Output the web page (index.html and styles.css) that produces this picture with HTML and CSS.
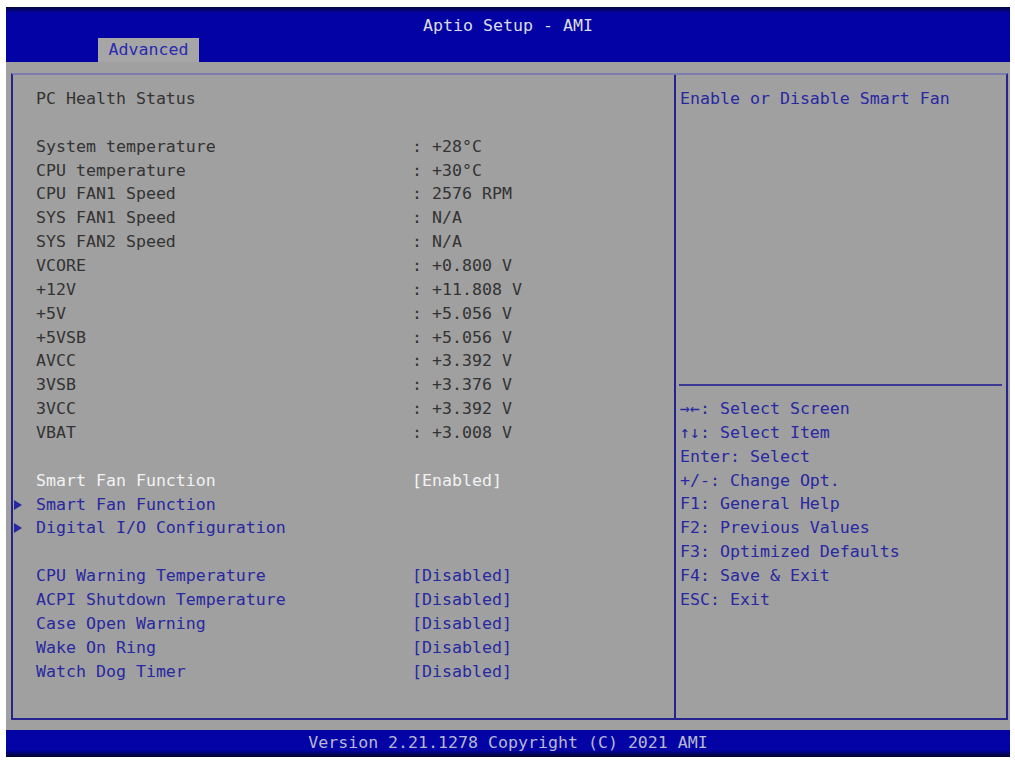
FILE: index.html
```html
<!DOCTYPE html>
<html lang="en">
<head>
  <meta charset="UTF-8">
  <title>Aptio Setup - AMI</title>
  <link rel="stylesheet" href="styles.css">
</head>
<body>
  <div class="screen">
    <div class="header">
      <div class="title">Aptio Setup - AMI</div>
      <div class="tabs">
        <span class="tab">Advanced</span>
      </div>
    </div>

    <div class="main">
      <div class="frame">
        <div class="left">
          <div class="row"><span></span><span class="label">PC Health Status</span></div>
          <div class="row"></div>
          <div class="row"><span></span><span class="label">System temperature</span><span class="value">: +28°C</span></div>
          <div class="row"><span></span><span class="label">CPU temperature</span><span class="value">: +30°C</span></div>
          <div class="row"><span></span><span class="label">CPU FAN1 Speed</span><span class="value">: 2576 RPM</span></div>
          <div class="row"><span></span><span class="label">SYS FAN1 Speed</span><span class="value">: N/A</span></div>
          <div class="row"><span></span><span class="label">SYS FAN2 Speed</span><span class="value">: N/A</span></div>
          <div class="row"><span></span><span class="label">VCORE</span><span class="value">: +0.800 V</span></div>
          <div class="row"><span></span><span class="label">+12V</span><span class="value">: +11.808 V</span></div>
          <div class="row"><span></span><span class="label">+5V</span><span class="value">: +5.056 V</span></div>
          <div class="row"><span></span><span class="label">+5VSB</span><span class="value">: +5.056 V</span></div>
          <div class="row"><span></span><span class="label">AVCC</span><span class="value">: +3.392 V</span></div>
          <div class="row"><span></span><span class="label">3VSB</span><span class="value">: +3.376 V</span></div>
          <div class="row"><span></span><span class="label">3VCC</span><span class="value">: +3.392 V</span></div>
          <div class="row"><span></span><span class="label">VBAT</span><span class="value">: +3.008 V</span></div>
          <div class="row"></div>
          <div class="row selected"><span></span><span class="label">Smart Fan Function</span><span class="value">[Enabled]</span></div>
          <div class="row option"><span class="arrow"></span><span class="label">Smart Fan Function</span></div>
          <div class="row option"><span class="arrow"></span><span class="label">Digital I/O Configuration</span></div>
          <div class="row"></div>
          <div class="row option"><span></span><span class="label">CPU Warning Temperature</span><span class="value">[Disabled]</span></div>
          <div class="row option"><span></span><span class="label">ACPI Shutdown Temperature</span><span class="value">[Disabled]</span></div>
          <div class="row option"><span></span><span class="label">Case Open Warning</span><span class="value">[Disabled]</span></div>
          <div class="row option"><span></span><span class="label">Wake On Ring</span><span class="value">[Disabled]</span></div>
          <div class="row option"><span></span><span class="label">Watch Dog Timer</span><span class="value">[Disabled]</span></div>
        </div>

        <div class="right">
          <div class="desc">Enable or Disable Smart Fan</div>
          <div class="sep"></div>
          <div class="keys">
            <div>→←: Select Screen</div>
            <div>↑↓: Select Item</div>
            <div>Enter: Select</div>
            <div>+/-: Change Opt.</div>
            <div>F1: General Help</div>
            <div>F2: Previous Values</div>
            <div>F3: Optimized Defaults</div>
            <div>F4: Save &amp; Exit</div>
            <div>ESC: Exit</div>
          </div>
        </div>
      </div>
    </div>

    <div class="footer">Version 2.21.1278 Copyright (C) 2021 AMI</div>
  </div>
</body>
</html>
```

FILE: styles.css
```css
body {
  margin: 0;
  background-color: #ffffff;
  font-family: "DejaVu Sans Mono", "Liberation Mono", monospace;
  font-size: 16.6px;
}
.screen {
  width: 1004px;
  height: 750px;
  margin: 7px 0 0 6px;
  display: flex;
  flex-direction: column;
}
.header {
  height: 55px;
  box-sizing: border-box;
  padding-top: 7px;
  background: linear-gradient(#05053a 0px, #0303a4 6px, #0303a6 100%);
  display: flex;
  flex-direction: column;
}
.title {
  height: 24px;
  line-height: 24px;
  text-align: center;
  color: #dcdce6;
}
.tabs {
  height: 24px;
  padding-left: 92px;
  display: flex;
}
.tab {
  width: 101px;
  line-height: 24px;
  text-align: center;
  background-color: #a6a6a6;
  color: #2a2ab0;
}
.main {
  flex: 1;
  min-height: 0;
  background-color: #a0a0a0;
  padding: 11px 2px 10px 5px;
  display: flex;
}
.frame {
  flex: 1;
  display: grid;
  grid-template-columns: 663px 1fr;
  border: 2px solid #24248c;
  border-top-color: #7c7cb0;
}
.left {
  padding-top: 12px;
  border-right: 2px solid #24248c;
}
.row {
  height: 23.86px;
  line-height: 23.86px;
  display: grid;
  grid-template-columns: 23px 376px auto;
  color: #333333;
  white-space: pre;
}
.row.selected {
  color: #f2f2f2;
}
.row.option {
  color: #2828a0;
}
.arrow {
  align-self: center;
  width: 0;
  height: 0;
  margin-left: 1px;
  border-left: 8px solid #2828a0;
  border-top: 5px solid transparent;
  border-bottom: 5px solid transparent;
}
.right {
  display: flex;
  flex-direction: column;
  color: #2828a0;
}
.desc {
  height: 297px;
  padding: 12px 0 0 4px;
  line-height: 23.86px;
}
.sep {
  height: 0;
  margin: 0 4px 0 3px;
  border-top: 2px solid #3a3a96;
}
.keys {
  padding: 11px 0 0 4px;
}
.keys div {
  height: 23.86px;
  line-height: 23.86px;
  white-space: pre;
}
.footer {
  height: 27px;
  line-height: 26px;
  text-align: center;
  color: #b8b8d0;
  background: linear-gradient(#0303a6 0px, #0303a6 20px, #02022a 100%);
}
```
